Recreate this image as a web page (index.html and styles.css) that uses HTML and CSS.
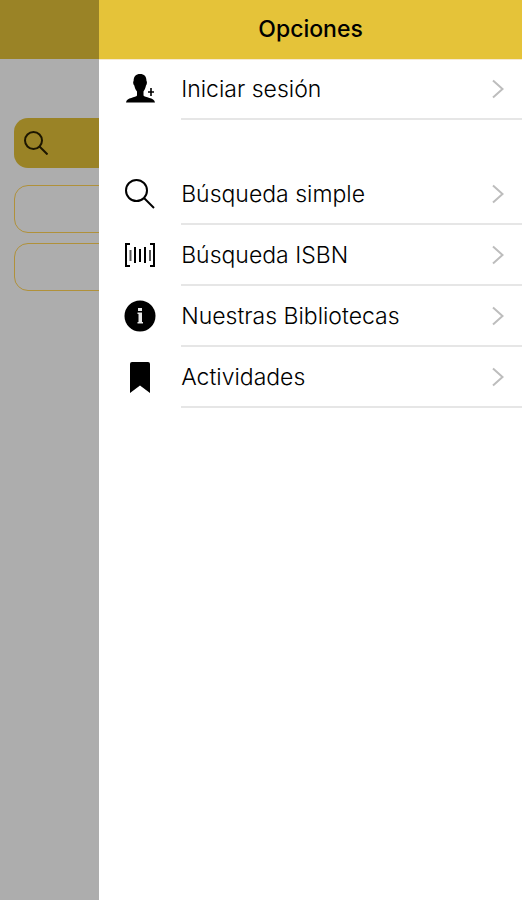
FILE: index.html
```html
<!DOCTYPE html>
<html lang="es">
<head>
  <meta charset="UTF-8">
  <meta name="viewport" content="width=device-width, initial-scale=1">
  <title>Opciones</title>
  <link rel="stylesheet" href="styles.css">
</head>
<body>
  <div class="app">
    <div class="page">
      <div class="page__bar"></div>
      <form class="search">
        <button type="button" class="search__button" aria-label="Buscar">
          <svg width="24" height="24" viewBox="0 0 24 24" fill="none" stroke="#1c1600" stroke-width="2">
            <circle cx="9.5" cy="9.5" r="8.5"/>
            <path d="M15.5 15.5L23.500 23.500"/>
          </svg>
        </button>
        <input type="text" class="search__field" aria-label="Título">
        <input type="text" class="search__field" aria-label="Autor">
      </form>
    </div>

    <div class="drawer">
      <header class="drawer__header">
        <h1 class="drawer__title">Opciones</h1>
      </header>
      <nav>
        <ul class="menu">
          <li class="menu__item">
            <a href="#" class="menu__link">
              <svg class="menu__icon" viewBox="0 0 32 32">
                <path d="M16 1C20.300 1 22.500 3.500 22.500 8C23.300 8.500 23 11.500 22 12.500C21.500 15 20.500 17 19.500 18.500V22.500C20.500 24.500 30.500 24.500 31 29.500H2C2.500 24.500 12 24.500 13 22.500V18.500C11.800 17 10.800 15 10.300 12.500C9.100 11.500 8.800 8.500 9.600 8C9.600 3.500 12 1 16 1Z"/>
                <path d="M27 15V23M24 19H30" stroke="#000" stroke-width="1.600"/>
              </svg>
              <span class="menu__text">Iniciar sesión</span>
              <svg class="menu__arrow" viewBox="0 0 12 20"><path d="M1 1.500L10.500 10L1 18.500"/></svg>
            </a>
          </li>
        </ul>
        <ul class="menu">
          <li class="menu__item">
            <a href="#" class="menu__link">
              <svg class="menu__icon" viewBox="0 0 32 32" fill="none" stroke="#000" stroke-width="2">
                <circle cx="12.500" cy="12.500" r="10.500"/>
                <path d="M20 20L30 30"/>
              </svg>
              <span class="menu__text">Búsqueda simple</span>
              <svg class="menu__arrow" viewBox="0 0 12 20"><path d="M1 1.500L10.500 10L1 18.500"/></svg>
            </a>
          </li>
          <li class="menu__item">
            <a href="#" class="menu__link">
              <svg class="menu__icon" viewBox="0 0 32 32" fill="none" stroke="#000" stroke-width="2">
                <path d="M6 5H2V27H6M26 5H30V27H26"/>
                <path d="M11 8V24M16 10V23M21 8V24"/>
                <path d="M6.500 11V22M26 11V22" stroke="#555"/>
              </svg>
              <span class="menu__text">Búsqueda ISBN</span>
              <svg class="menu__arrow" viewBox="0 0 12 20"><path d="M1 1.500L10.500 10L1 18.500"/></svg>
            </a>
          </li>
          <li class="menu__item">
            <a href="#" class="menu__link">
              <svg class="menu__icon" viewBox="0 0 32 32">
                <circle cx="16" cy="16" r="15.500"/>
                <path d="M14 8H18V11H14ZM13.500 12.500H18V22H19V23.500H13.500V22H14.500V14H13.500Z" fill="#e8e8e8"/>
              </svg>
              <span class="menu__text">Nuestras Bibliotecas</span>
              <svg class="menu__arrow" viewBox="0 0 12 20"><path d="M1 1.500L10.500 10L1 18.500"/></svg>
            </a>
          </li>
          <li class="menu__item">
            <a href="#" class="menu__link">
              <svg class="menu__icon" viewBox="0 0 32 32">
                <path d="M8 1H24Q26 1 26 3V32L16 24.500L6 32V3Q6 1 8 1Z"/>
              </svg>
              <span class="menu__text">Actividades</span>
              <svg class="menu__arrow" viewBox="0 0 12 20"><path d="M1 1.500L10.500 10L1 18.500"/></svg>
            </a>
          </li>
        </ul>
      </nav>
    </div>
  </div>
</body>
</html>
```
FILE: styles.css
```css
html {
  box-sizing: border-box;
}

*, *:before, *:after {
  box-sizing: inherit;
}

body {
  margin: 0;
  background: #fff;
  color: #000;
  font-family: Inter, "Liberation Sans", sans-serif;
}

.app {
  display: flex;
  min-height: 100vh;
}

/* dimmed page behind the drawer */
.page {
  flex: 0 0 19%;
  overflow: hidden;
  background: #adadad;
}

.page__bar {
  height: 59px;
  background: #9a8326;
}

.search {
  display: flex;
  flex-direction: column;
  gap: 10px;
  width: 400px;
  padding: 59px 14px;
}

.search__button {
  display: flex;
  align-items: center;
  height: 50px;
  margin: 0 0 7px;
  padding: 0 10px;
  border: 0;
  border-radius: 14px;
  background: #9a8326;
  cursor: pointer;
}

.search__field {
  height: 48px;
  padding: 0 12px;
  border: 1px solid #b0913a;
  border-radius: 14px;
  background: none;
  font: inherit;
}

.drawer {
  flex: 1;
  min-width: 0;
  background: #fff;
}

.drawer__header {
  display: flex;
  align-items: center;
  justify-content: center;
  height: 59px;
  padding-bottom: 2px;
  background: #e5c339;
  box-shadow: 0 1px 0 #f6e9d2;
}

.drawer__title {
  margin: 0;
  font-size: 23px;
  font-weight: 500;
}

.menu {
  margin: 0 0 44px;
  padding: 0;
  list-style: none;
}

.menu__link {
  display: grid;
  grid-template-columns: 32px 1fr 12px;
  align-items: center;
  column-gap: 25px;
  height: 61px;
  padding: 0 18px 2px 25px;
  /* divider starts under the text, not under the icon */
  background: linear-gradient(#e6e6e6, #e6e6e6) 82px 100% / 100% 2px no-repeat;
  color: inherit;
  text-decoration: none;
}

.menu__icon {
  width: 32px;
  height: 32px;
}

.menu__text {
  font-size: 23px;
  font-weight: 300;
  line-height: 28px;
  white-space: nowrap;
}

.menu__arrow {
  width: 12px;
  height: 20px;
  fill: none;
  stroke: #bdbdbd;
  stroke-width: 2;
}
```
